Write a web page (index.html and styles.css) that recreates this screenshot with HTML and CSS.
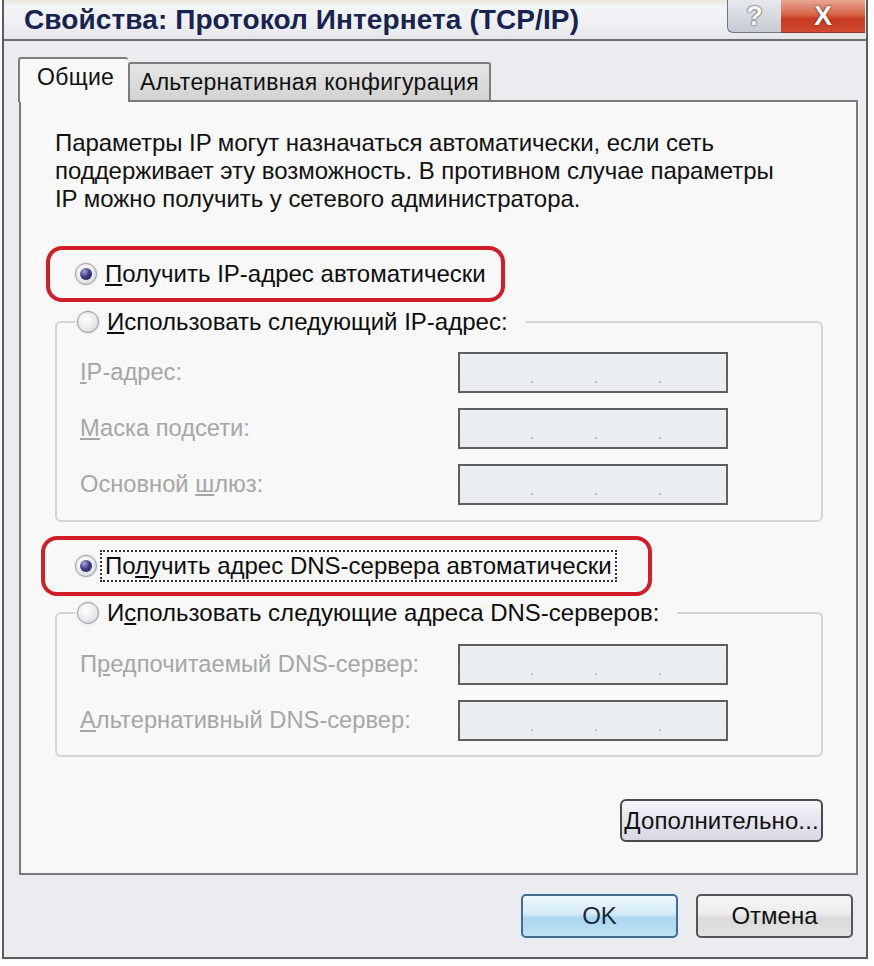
FILE: index.html
```html
<!DOCTYPE html>
<html lang="ru">
<head>
<meta charset="utf-8">
<title>Свойства: Протокол Интернета (TCP/IP)</title>
<link rel="stylesheet" href="styles.css">
</head>
<body>
<div class="window">
  <div class="titlebar">
    <span class="title">Свойства: Протокол Интернета (TCP/IP)</span>
    <div class="caption-btns">
      <div class="cap-btn help">?</div>
      <div class="cap-btn close">X</div>
    </div>
  </div>
  <div class="client">
    <div class="tabs">
      <div class="tab active">Общие</div>
      <div class="tab">Альтернативная конфигурация</div>
    </div>
    <div class="panel">
      <p class="intro">Параметры IP могут назначаться автоматически, если сеть<br>поддерживает эту возможность. В противном случае параметры<br>IP можно получить у сетевого администратора.</p>

      <div class="mark mark-ip">
        <div class="radio-row"><span class="radio on"></span><span class="rlabel"><u>П</u>олучить IP-адрес автоматически</span></div>
      </div>

      <fieldset class="group group-ip">
        <legend><div class="radio-row"><span class="radio"></span><span class="rlabel"><u>И</u>спользовать следующий IP-адрес:</span></div></legend>
        <div class="field"><span class="flabel"><u>I</u>P-адрес:</span><span class="ipbox"><i>.</i><i>.</i><i>.</i></span></div>
        <div class="field"><span class="flabel"><u>М</u>аска подсети:</span><span class="ipbox"><i>.</i><i>.</i><i>.</i></span></div>
        <div class="field"><span class="flabel">Основной <u>ш</u>люз:</span><span class="ipbox"><i>.</i><i>.</i><i>.</i></span></div>
      </fieldset>

      <div class="mark mark-dns">
        <div class="radio-row"><span class="radio on"></span><span class="rlabel focus">По<u>л</u>учить адрес DNS-сервера автоматически</span></div>
      </div>

      <fieldset class="group group-dns">
        <legend><div class="radio-row"><span class="radio"></span><span class="rlabel">И<u>с</u>пользовать следующие адреса DNS-серверов:</span></div></legend>
        <div class="field"><span class="flabel">П<u>р</u>едпочитаемый DNS-сервер:</span><span class="ipbox"><i>.</i><i>.</i><i>.</i></span></div>
        <div class="field"><span class="flabel"><u>А</u>льтернативный DNS-сервер:</span><span class="ipbox"><i>.</i><i>.</i><i>.</i></span></div>
      </fieldset>

      <div class="adv-row"><button class="btn adv"><u>Д</u>ополнительно...</button></div>
    </div>
    <div class="footer">
      <button class="btn ok">OK</button>
      <button class="btn cancel">Отмена</button>
    </div>
  </div>
</div>
</body>
</html>
```
FILE: styles.css
```css
* { box-sizing: border-box; }
html, body { margin: 0; padding: 0; background: #fdfdfd; }
body { font-family: "Liberation Sans", Arial, sans-serif; color: #111; }

.window {
  width: 866px;
  margin-left: 2px;
  border: 2px solid #5c5c5c;
  border-top: 0;
  background: #ebecef;
}

.titlebar {
  height: 41px;
  display: flex;
  align-items: flex-start;
  justify-content: space-between;
  padding-left: 20px;
  background: linear-gradient(#e9e6d8 0, #f3f4f6 6px, #eef0f3 60%, #e4e6ea 100%);
  border-bottom: 2px solid #6d6d6d;
}
.title {
  margin-top: 4px;
  font-size: 28px;
  font-weight: bold;
  color: #17244f;
  letter-spacing: 0.1px;
}
.caption-btns { display: flex; }
.cap-btn {
  height: 33px;
  display: flex;
  align-items: center;
  justify-content: center;
  font-weight: bold;
  font-size: 27px;
  color: #fff;
}
.cap-btn.help {
  width: 54px;
  border: 1px solid #70757e;
  border-top: 0;
  border-right: 0;
  border-bottom-left-radius: 6px;
  background: linear-gradient(#e6e9ee, #c5cad2);
  text-shadow: 0 0 2px #333, 0 0 1px #333;
}
.cap-btn.close {
  width: 84px;
  margin-right: 1px;
  border-bottom: 1px solid #8a3a2a;
  background: linear-gradient(#e9a691 0, #d8664a 45%, #c7391f 60%, #cf4c33 100%);
  text-shadow: 0 0 2px #5a1a10, 0 0 1px #5a1a10;
}

.client {
  padding: 16px 8px 19px 15px;
}

.tabs {
  display: flex;
  align-items: flex-end;
  margin-left: -1px;
  height: 45px;
  margin-bottom: -2px;
  position: relative;
  z-index: 1;
}
.tab {
  height: 38px;
  padding: 0 10px;
  display: flex;
  align-items: center;
  font-size: 23px;
  letter-spacing: 0.3px;
  border: 2px solid #7d7d7d;
  border-bottom: 0;
  border-radius: 3px 3px 0 0;
  background: linear-gradient(#e6e6e6, #d2d2d2);
  color: #111;
  margin-bottom: 2px;
  white-space: nowrap;
}
.tab.active {
  height: 45px;
  width: 110px;
  padding: 0 0 6px 17px;
  background: #f8f8f8;
  border-right: 0;
  margin-bottom: 0;
}

.panel {
  border: 2px solid #7a7a7a;
  background: #f8f8f8;
  padding: 27px 0 31px 0;
}

.intro {
  margin: 0 0 33px 34px;
  font-size: 24px;
  line-height: 28px;
  letter-spacing: -0.05px;
  color: #111;
}

.mark {
  border: 4px solid #d11d28;
  border-radius: 16px;
  display: flex;
  align-items: center;
}
.mark-ip {
  width: 459px;
  height: 56px;
  margin-left: 25px;
  padding-left: 25px;
}
.mark-dns {
  width: 611px;
  height: 60px;
  margin-left: 20px;
  margin-top: 14px;
  padding-left: 30px;
}

.radio-row {
  display: flex;
  align-items: center;
  height: 26px;
}
.radio {
  width: 22px;
  height: 22px;
  border-radius: 50%;
  border: 1px solid #9a9ca4;
  background: radial-gradient(circle at 40% 35%, #ffffff 0, #e9e9ec 55%, #c9cbd1 100%);
  box-shadow: 0 0 2px #c0c0c0;
  flex: none;
  display: flex;
  align-items: center;
  justify-content: center;
}
.radio.on::after {
  content: "";
  width: 12px;
  height: 12px;
  border-radius: 50%;
  background: radial-gradient(circle at 35% 30%, #a6a8d8 0, #3c3f86 45%, #1c1d4a 100%);
}
.rlabel {
  margin-left: 8px;
  font-size: 24px;
  line-height: 26px;
  color: #0d0d0d;
  white-space: nowrap;
}
.rlabel.focus {
  margin-left: 6px;
  padding: 0 2px;
  outline: 2px dotted #333;
  outline-offset: 1px;
}

.group {
  margin: 0 33px 0 34px;
  border: 2px solid #d4d4d4;
  border-radius: 6px;
  padding: 17px 0 15px 0;
  min-width: 0;
}
.group-ip { margin-top: 7px; }
.group-dns { margin-top: 4px; padding-top: 18px; padding-bottom: 14px; }
.group legend {
  margin-left: 18px;
  padding: 0 18px 0 2px;
}

.field {
  display: flex;
  align-items: center;
  padding-left: 23px;
  height: 41px;
}
.field + .field { margin-top: 15px; }
.flabel {
  width: 378px;
  font-size: 23.7px;
  color: #a6a6a6;
  white-space: nowrap;
}
.ipbox {
  width: 270px;
  height: 41px;
  border: 2px solid #5f5f5f;
  background: linear-gradient(#eceff1, #e9edf0);
  display: flex;
  align-items: flex-end;
  padding: 0 0 7px 70px;
  gap: 60px;
}
.ipbox i {
  font-style: normal;
  font-size: 14px;
  color: #9aa0a6;
  width: 4px;
  line-height: 12px;
}

.adv-row {
  display: flex;
  justify-content: flex-end;
  margin: 42px 33px 0 0;
}

.btn {
  font-family: "Liberation Sans", Arial, sans-serif;
  font-size: 24px;
  color: #111;
  cursor: default;
}
.btn.adv {
  width: 203px;
  height: 43px;
  border: 2px solid #4a4a4a;
  border-radius: 6px;
  background: linear-gradient(#f6f6fb, #e5e4ee 50%, #d8d7e4);
  padding: 0;
  letter-spacing: 0.1px;
}

.footer {
  display: flex;
  justify-content: flex-end;
  gap: 18px;
  margin: 19px 5px 0 0;
}
.btn.ok, .btn.cancel {
  width: 157px;
  height: 44px;
  border-radius: 5px;
  padding: 0;
}
.btn.ok {
  border: 2px solid #3e6f8e;
  background: linear-gradient(#eef7fc 0, #d3ebf8 45%, #aad6ee 55%, #bfe2f3 100%);
  color: #1a2838;
}
.btn.cancel {
  border: 2px solid #555;
  background: linear-gradient(#f6f6f6 0, #ececec 45%, #dadada 55%, #e2e2e2 100%);
}
```
